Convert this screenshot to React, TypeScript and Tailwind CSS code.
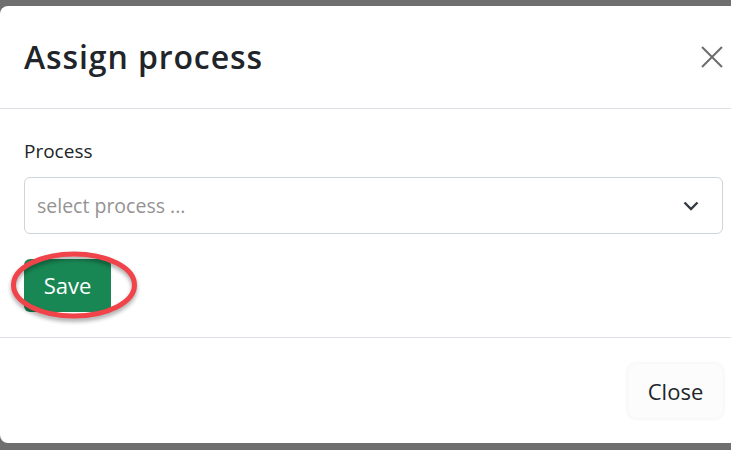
export default function App() {
  return (
    <div className="h-[450px] w-[731px] overflow-hidden bg-[#6f6f6f] pt-[6px] font-['Open_Sans',sans-serif]">
      <div className="w-[747px] rounded-l-[8px] bg-white">
        {/* header */}
        <div className="flex h-[103px] items-center justify-between border-b border-[#dee2e6] px-6">
          <h1 className="text-[32px] font-semibold leading-none tracking-[0.9px] text-[#212529]">
            Assign process
          </h1>
          <button className="flex h-[22px] w-[22px] items-center justify-center">
            <svg viewBox="0 0 22 22" className="h-[22px] w-[22px]">
              <path d="M1 1L21 21M21 1L1 21" stroke="#6c6c6c" strokeWidth="2" />
            </svg>
          </button>
        </div>

        {/* body */}
        <div className="border-b border-[#dee2e6] px-6 pb-[25px] pt-[28px]">
          <label className="block text-[19px] leading-[28px] text-[#212529]">Process</label>
          <div className="mt-[12px] flex h-[57px] items-center justify-between rounded-[6px] border border-[#ced4da] pl-[12px] pr-[23px]">
            <span className="text-[19.5px] text-[#939393]">select process ...</span>
            <svg viewBox="0 0 16 10" className="h-[10px] w-[16px]">
              <path d="M1.5 1.5L8 8L14.5 1.5" fill="none" stroke="#343a40" strokeWidth="2.4" />
            </svg>
          </div>
          <div className="relative mt-[25px] w-fit">
            <button className="flex h-[53px] w-[87px] items-center justify-center rounded-[6px] bg-[#198754] text-[22px] text-white">
              Save
            </button>
            <svg
              className="pointer-events-none absolute left-[-14px] top-[-8px] h-[70px] w-[130px] drop-shadow-[0_3px_2px_rgba(0,0,0,0.35)]"
              viewBox="0 0 130 70"
            >
              <ellipse cx="64" cy="34" rx="60.5" ry="31" fill="none" stroke="#f0444a" strokeWidth="5" />
            </svg>
          </div>
        </div>

        {/* footer */}
        <div className="flex justify-start pb-[25px] pl-[628px] pt-[26px]">
          <button className="flex h-[54px] w-[95px] items-center justify-center rounded-[8px] bg-[#fcfcfc] text-[22px] text-[#212529] shadow-[0_0_4px_rgba(0,0,0,0.08)]">
            Close
          </button>
        </div>
      </div>
    </div>
  );
}
